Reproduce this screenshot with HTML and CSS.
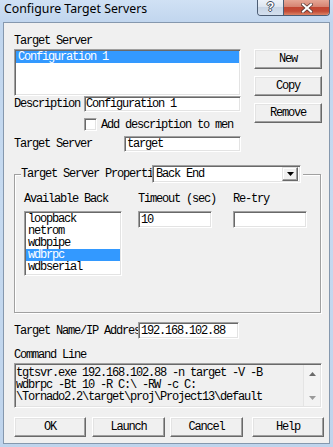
FILE: index.html
```html
<!DOCTYPE html>
<html lang="en">
<head>
  <meta charset="UTF-8" />
  <title>Configure Target Servers</title>
  <link rel="stylesheet" href="styles.css">
</head>
<body>
  <div class="window">
    <!-- title bar with help / close caption buttons -->
    <div class="titlebar">
      <span class="title">Configure Target Servers</span>
      <div class="caption">
        <div class="cap-help">?</div>
        <div class="cap-close">
          <svg width="12" height="10" viewBox="0 0 12 10">
            <path d="M2 1.5 L10 8.5 M10 1.5 L2 8.5" stroke="#5a3a36" stroke-width="3.6" stroke-linecap="square" />
            <path d="M2 1.5 L10 8.5 M10 1.5 L2 8.5" stroke="#fff" stroke-width="2" stroke-linecap="square" />
          </svg>
        </div>
      </div>
    </div>

    <div class="client">
      <div class="top">
        <div class="top-left">
          <div class="lbl">Target Server</div>
          <div class="listbox cfg-list sunken">
            <div class="item sel">Configuration 1</div>
          </div>
          <div class="row desc-row">
            <span class="lbl desc-lbl">Description</span>
            <div class="edit sunken desc-edit">Configuration 1</div>
          </div>
          <div class="row check-row">
            <span class="checkbox sunken"></span>
            <span class="lbl">Add description to men</span>
          </div>
          <div class="row ts-row">
            <span class="lbl ts-lbl">Target Server</span>
            <div class="edit sunken ts-edit">target</div>
          </div>
        </div>
        <div class="side-btns">
          <div class="btn">New</div>
          <div class="btn">Copy</div>
          <div class="btn">Remove</div>
        </div>
      </div>

      <fieldset class="group">
        <legend>
          <div class="legend-inner">
            <span class="legend-text">Target Server Properti</span>
            <div class="combo sunken">
              <span class="combo-text">Back End</span>
              <span class="combo-btn">
                <svg width="7" height="4" viewBox="0 0 7 4"><path d="M0 0 H7 L3.5 4 Z" fill="#000" /></svg>
              </span>
            </div>
          </div>
        </legend>
        <div class="group-body">
          <div class="col col-back">
            <div class="lbl col-lbl">Available Back</div>
            <div class="listbox back-list sunken">
              <div class="item">loopback</div>
              <div class="item">netrom</div>
              <div class="item">wdbpipe</div>
              <div class="item sel">wdbrpc</div>
              <div class="item">wdbserial</div>
            </div>
          </div>
          <div class="col col-timeout">
            <div class="lbl col-lbl">Timeout (sec)</div>
            <div class="edit sunken small-edit">10</div>
          </div>
          <div class="col col-retry">
            <div class="lbl col-lbl">Re-try</div>
            <div class="edit sunken small-edit"></div>
          </div>
        </div>
      </fieldset>

      <div class="row ip-row">
        <span class="lbl ip-lbl">Target Name/IP Addres</span>
        <div class="edit sunken ip-edit">192.168.102.88</div>
      </div>

      <div class="lbl cmd-lbl">Command Line</div>
      <div class="cmdline sunken">
        <div class="cmd-text">
          <div class="cmd-line">tgtsvr.exe 192.168.102.88 -n target -V -B</div>
          <div class="cmd-line">wdbrpc -Bt 10 -R C:\ -RW -c C:</div>
          <div class="cmd-line">\Tornado2.2\target\proj\Project13\default</div>
        </div>
        <div class="vscroll">
          <span class="arrow">
            <svg width="7" height="4" viewBox="0 0 7 4"><path d="M0 4 H7 L3.5 0 Z" fill="#6a6a6a" /></svg>
          </span>
          <span class="arrow">
            <svg width="7" height="4" viewBox="0 0 7 4"><path d="M0 0 H7 L3.5 4 Z" fill="#9a9a9a" /></svg>
          </span>
        </div>
      </div>

      <div class="bottom-btns">
        <div class="btn btn-ok">OK</div>
        <div class="btn btn-launch">Launch</div>
        <div class="btn btn-cancel">Cancel</div>
        <div class="btn btn-help">Help</div>
      </div>
    </div>
  </div>
</body>
</html>
```

FILE: styles.css
```css
* {
  box-sizing: border-box;
}
body {
  margin: 0;
  width: 333px;
  height: 447px;
  overflow: hidden;
  background: #c4d8ef;
}
.window {
  width: 333px;
  height: 447px;
  padding: 0 3px 3px 3px;
  display: flex;
  flex-direction: column;
  background: linear-gradient(to bottom, #d0e1f4 0, #c1d6ee 22px, #c6daf0 200px, #bfd4ec 100%);
}

/* title bar */
.titlebar {
  height: 22px;
  display: flex;
  align-items: flex-start;
  justify-content: space-between;
}
.title {
  padding: 1px 0 0 1px;
  font: 12.3px/16px "Noto Sans", sans-serif;
  color: #000;
}
.caption {
  display: flex;
  height: 16px;
  border: 1px solid #4c5d74;
  border-top: 0;
  border-radius: 0 0 4px 4px;
  overflow: hidden;
}
.cap-help {
  width: 26px;
  border-right: 1px solid #4c5d74;
  background: linear-gradient(to bottom, #edf2f9 0, #dbe4ef 50%, #c8d5e5 50%, #d3dfee 100%);
  color: #fff;
  font: bold 12px/15px "Liberation Sans", sans-serif;
  text-align: center;
  text-shadow: 1px 0 0 #3d4a5c, -1px 0 0 #3d4a5c, 0 1px 0 #3d4a5c, 0 -1px 0 #3d4a5c;
}
.cap-close {
  width: 45px;
  display: flex;
  align-items: center;
  justify-content: center;
  background: linear-gradient(to bottom, #e6a796 0, #d4806e 50%, #c24632 50%, #c34c36 75%, #dc8466 100%);
}

/* dialog client area */
.client {
  flex: 1;
  background: #f0f0f0;
  border: 1px solid #8598ae;
  padding: 12px 0 0 10px;
  font: 12px/12px "Liberation Mono", monospace;
  letter-spacing: -1.2px;
  color: #000;
}
.lbl {
  white-space: nowrap;
  height: 12px;
}
.sunken {
  background: #fff;
  border: 1px solid;
  border-color: #a0a0a0 #fff #fff #a0a0a0;
  box-shadow: inset 1px 1px 0 #696969, inset -1px -1px 0 #e3e3e3;
}
.btn {
  display: flex;
  align-items: center;
  justify-content: center;
  height: 20px;
  background: #f0f0f0;
  border: 1px solid;
  border-color: #fff #696969 #696969 #fff;
  box-shadow: inset -1px -1px 0 #a0a0a0, inset 1px 1px 0 #e3e3e3;
}
.row {
  display: flex;
  align-items: center;
}
.edit {
  display: flex;
  align-items: center;
  padding: 0 2px;
  white-space: nowrap;
  overflow: hidden;
}
.listbox {
  padding: 1px;
  overflow: hidden;
}
.item {
  height: 12px;
  padding-left: 2px;
  white-space: nowrap;
}
.item.sel {
  background: #3399ff;
  color: #fff;
}

/* top section */
.top {
  display: flex;
  align-items: flex-start;
}
.top-left {
  width: 227px;
}
.cfg-list {
  margin-top: 2px;
  height: 47px;
}
.desc-row {
  height: 16px;
}
.desc-lbl {
  width: 70px;
}
.desc-edit {
  width: 157px;
  height: 16px;
  padding-left: 1px;
}
.check-row {
  margin-top: 6px;
  height: 13px;
}
.checkbox {
  width: 13px;
  height: 13px;
  margin-left: 70px;
  margin-right: 4px;
}
.ts-row {
  margin-top: 5px;
  height: 16px;
}
.ts-lbl {
  width: 110px;
}
.ts-edit {
  width: 117px;
  height: 16px;
}
.side-btns {
  margin: 14px 0 0 13px;
  display: flex;
  flex-direction: column;
  gap: 7px;
}
.side-btns .btn {
  width: 68px;
}

/* group box */
.group {
  margin: 13px 0 0 0;
  padding: 0;
  width: 307px;
  min-width: 0;
  border: 1px solid #a0a0a0;
  box-shadow: inset 1px 1px 0 #fff, 1px 1px 0 #fff;
}
.group legend {
  margin-left: 6px;
  padding: 0 2px 0 0;
  background: #f0f0f0;
}
.legend-inner {
  display: flex;
  align-items: center;
  height: 18px;
}
.legend-text {
  width: 131px;
  white-space: nowrap;
}
.combo {
  width: 149px;
  height: 18px;
  display: flex;
  align-items: center;
  padding: 1px;
}
.combo-text {
  flex: 1;
  padding-left: 2px;
}
.combo-btn {
  width: 16px;
  height: 14px;
  margin: 0 1px 0 0;
  display: flex;
  align-items: center;
  justify-content: center;
  background: #f0f0f0;
  border: 1px solid;
  border-color: #e3e3e3 #696969 #696969 #e3e3e3;
  box-shadow: inset -1px -1px 0 #a0a0a0, inset 1px 1px 0 #fff;
}
.group-body {
  display: flex;
  align-items: flex-start;
  padding: 10px 0 36px 9px;
}
.col-lbl {
  margin-bottom: 6px;
}
.col-back {
  width: 98px;
}
.col-timeout {
  width: 74px;
  margin-left: 16px;
}
.col-retry {
  width: 74px;
  margin-left: 21px;
}
.back-list {
  height: 65px;
}
.small-edit {
  height: 17px;
}

/* lower section */
.ip-row {
  margin-top: 9px;
  height: 17px;
}
.ip-lbl {
  width: 124px;
}
.ip-edit {
  width: 101px;
  height: 17px;
}
.cmd-lbl {
  margin-top: 10px;
}
.cmdline {
  margin-top: 2px;
  width: 308px;
  height: 45px;
  padding: 1px;
  display: flex;
  background: #f0f0f0;
}
.cmd-text {
  flex: 1;
  padding-top: 2px;
  overflow: hidden;
}
.cmd-line {
  height: 12px;
  white-space: nowrap;
}
.vscroll {
  width: 17px;
  display: flex;
  flex-direction: column;
  justify-content: space-between;
  background: #f3f3f3;
  border-left: 1px solid #e4e4e4;
}
.arrow {
  height: 17px;
  display: flex;
  align-items: center;
  justify-content: center;
}
.bottom-btns {
  margin-top: 9px;
  display: flex;
}
.btn-ok {
  width: 72px;
}
.btn-launch {
  width: 73px;
  margin-left: 6px;
}
.btn-cancel {
  width: 73px;
  margin-left: 5px;
}
.btn-help {
  width: 72px;
  margin-left: 9px;
}
```
